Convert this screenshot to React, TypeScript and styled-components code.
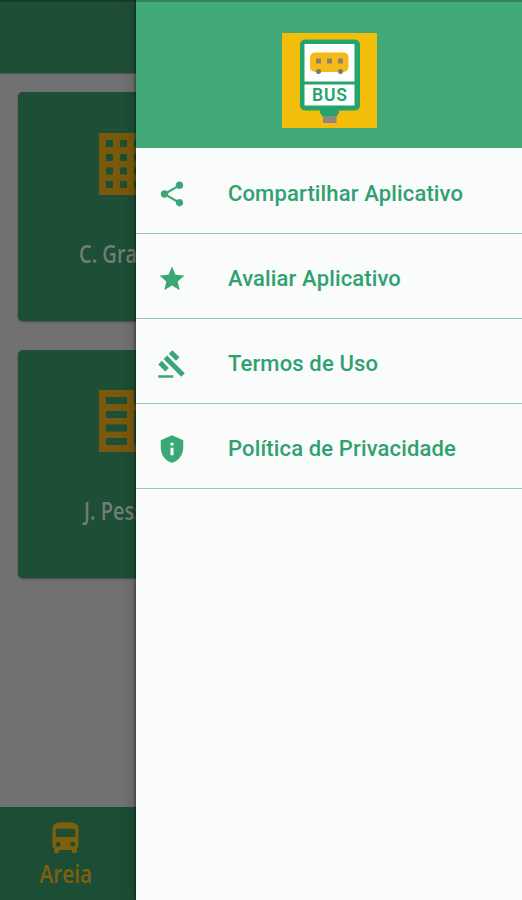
import React from "react";
import styled, { createGlobalStyle } from "styled-components";
import { MdShare, MdStar, MdGavel, MdDirectionsBus } from "react-icons/md";

const GlobalStyle = createGlobalStyle`
  *, *::before, *::after { box-sizing: border-box; }
  body { margin: 0; background: #717171; }
`;

const Phone = styled.div`
  position: relative;
  width: 522px;
  height: 900px;
  overflow: hidden;
  font-family: Roboto, "Liberation Sans", sans-serif;
`;

const Screen = styled.div`
  display: flex;
  flex-direction: column;
  height: 100%;
  background: #717171;
`;

const AppBar = styled.header`
  flex: none;
  height: 73px;
  background: #1e4e36;
  border-top: 2px solid #163a29;
  box-shadow: 0 1px 1px rgba(0, 0, 0, 0.25);
`;

const CityList = styled.main`
  flex: 1;
  display: flex;
  flex-direction: column;
  gap: 29px;
  padding: 19px 281px 0 18px;
`;

const CityCard = styled.section`
  display: flex;
  flex-direction: column;
  align-items: center;
  height: 228.5px;
  padding-top: 40.5px;
  border-radius: 5px;
  background: #1d4e36;
  box-shadow: 0 1px 2px rgba(0, 0, 0, 0.35);

  svg { display: block; width: 62px; height: 62px; flex: none; }
`;

const CityName = styled.span<{ $shift: number }>`
  margin: 40px 0 0 ${(p) => p.$shift}px;
  align-self: flex-start;
  font: 600 26px/36px "Open Sans", "Noto Sans", sans-serif;
  white-space: nowrap;
  color: #717d75;
  transform: scaleX(0.77);
  transform-origin: left center;
`;

const BottomBar = styled.nav`
  flex: none;
  height: 93px;
  background: #1c4e35;
`;

const Tab = styled.div`
  display: flex;
  flex-direction: column;
  align-items: center;
  width: 131px;
  padding-top: 12px;
  color: #80600b;

  svg { display: block; width: 39px; height: 39px; }
`;

const TabLabel = styled.span`
  font: 600 26px/30px "Open Sans", "Noto Sans", sans-serif;
  transform: scaleX(0.8);
`;

const Drawer = styled.aside`
  position: absolute;
  inset: 0 0 0 136px;
  display: flex;
  flex-direction: column;
  background: #fafbfb;
  box-shadow: 0 0 3px rgba(0, 0, 0, 0.75), 0 0 16px rgba(0, 0, 0, 0.22);
`;

const DrawerHeader = styled.header`
  flex: none;
  display: flex;
  justify-content: center;
  height: 148px;
  padding-top: 31px;
  background: #42a978;
  border-top: 2px solid #338360;

  svg { display: block; width: 95px; height: 95px; }
`;

const MenuItem = styled.a`
  flex: none;
  display: flex;
  align-items: center;
  height: 85.1px;
  padding: 6px 0 0 21px;
  border-bottom: 1px solid #96c6b5;
  color: #3ba777;

  &:first-of-type { height: 86px; }

  svg { display: block; flex: none; width: 30px; height: 30px; }
`;

const MenuText = styled.span`
  margin-left: 41px;
  font-size: 22px;
  font-weight: 500;
  line-height: 28px;
  letter-spacing: 0.14px;
  white-space: nowrap;
  color: #2fa170;
`;

const BusLogo = () => (
  <svg viewBox="0 0 95 95">
    <rect width="95" height="95" fill="#f2bd0b" />
    <path d="M38 76h19v4l-3 4H41l-3-4z" fill="#25a36c" />
    <rect x="41" y="83" width="13.500" height="7" fill="#8e887e" />
    <rect x="18" y="6.500" width="60" height="71" rx="5" fill="#25a36c" />
    <rect x="22.500" y="11" width="50" height="37.500" fill="#fff" />
    <rect x="22.500" y="51.500" width="50" height="21" fill="#fff" />
    <rect x="28" y="19.500" width="38.500" height="19.500" rx="5" fill="#f4bb18" />
    <path d="M34 25.500h5v5h-5zM45 25.500h5v5h-5zM56 25.500h5v5h-5z" fill="#8c806d" />
    <circle cx="36.500" cy="38.500" r="2.500" fill="#7d776d" />
    <circle cx="58.500" cy="38.500" r="2.500" fill="#7d776d" />
    <text x="47.500" y="67.500" textAnchor="middle" textLength="35" fontFamily="Roboto, sans-serif" fontWeight="600" fontSize="17.500" fill="#25a36c">BUS</text>
  </svg>
);

const TowerIcon = () => (
  <svg viewBox="0 0 62 62">
    <rect width="62" height="62" fill="#79590c" />
    {[7, 21, 35, 49].map((x) =>
      [7, 21, 34.5, 48].map((y) => (
        <rect key={`${x}-${y}`} x={x} y={y} width="7" height="7" rx="1" fill="#1d4e36" />
      ))
    )}
  </svg>
);

const OfficeIcon = () => (
  <svg viewBox="0 0 62 62">
    <path d="M0 0h35v14h27v48H0z" fill="#79590c" />
    {[7, 21, 34.5, 48].map((y) => (
      <rect key={y} x="7" y={y} width="21" height="7" fill="#1d4e36" />
    ))}
    <path d="M35 20.500h20v34H35z" fill="#1d4e36" />
    <path d="M41 27h7v7h-7zM41 41h7v7h-7z" fill="#79590c" />
  </svg>
);

const ShieldInfoIcon = () => (
  <svg viewBox="0 0 24 24" fill="currentColor">
    <path fillRule="evenodd" d="M12 1 3 5v6c0 5.550 3.840 10.740 9 12 5.160-1.260 9-6.450 9-12V5zm-1.200 6h2.400v2.200h-2.400zm0 4h2.400v6h-2.400z" />
  </svg>
);

const cities = [
  { name: "C. Grande", icon: <TowerIcon />, shift: 61 },
  { name: "J. Pessoa", icon: <OfficeIcon />, shift: 66 },
];

const menu = [
  { label: "Compartilhar Aplicativo", icon: <MdShare /> },
  { label: "Avaliar Aplicativo", icon: <MdStar /> },
  { label: "Termos de Uso", icon: <MdGavel /> },
  { label: "Política de Privacidade", icon: <ShieldInfoIcon /> },
];

export default function App() {
  return (
    <>
      <GlobalStyle />
      <Phone>
        <Screen>
          <AppBar />
          <CityList>
            {cities.map((city) => (
              <CityCard key={city.name}>
                {city.icon}
                <CityName $shift={city.shift}>{city.name}</CityName>
              </CityCard>
            ))}
          </CityList>
          <BottomBar>
            <Tab>
              <MdDirectionsBus />
              <TabLabel>Areia</TabLabel>
            </Tab>
          </BottomBar>
        </Screen>
        <Drawer>
          <DrawerHeader>
            <BusLogo />
          </DrawerHeader>
          {menu.map((item) => (
            <MenuItem key={item.label}>
              {item.icon}
              <MenuText>{item.label}</MenuText>
            </MenuItem>
          ))}
        </Drawer>
      </Phone>
    </>
  );
}
